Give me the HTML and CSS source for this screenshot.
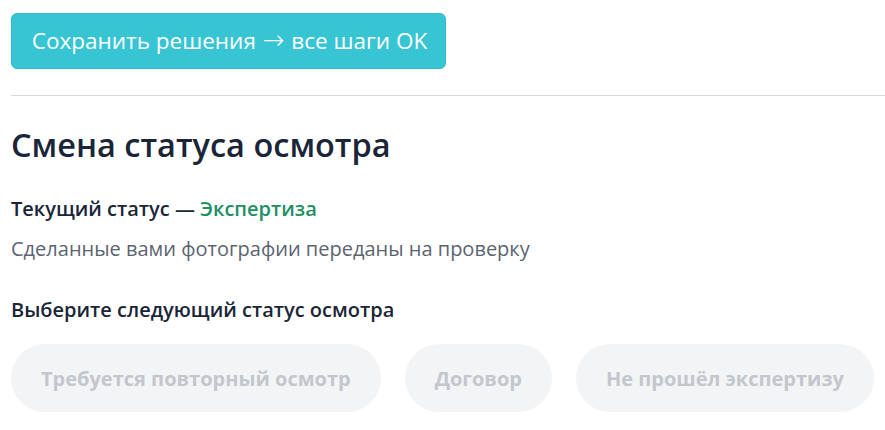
FILE: index.html
```html
<!DOCTYPE html>
<html lang="ru">
<head>
<meta charset="utf-8">
<link rel="stylesheet" href="styles.css">
</head>
<body>
<div class="page">
  <button class="save-btn">Сохранить решения <span class="arrow">→</span> все шаги OK</button>
  <hr class="divider">
  <h2 class="title">Смена статуса осмотра</h2>
  <p class="current">Текущий статус — <span class="status">Экспертиза</span></p>
  <p class="desc">Сделанные вами фотографии переданы на проверку</p>
  <p class="choose">Выберите следующий статус осмотра</p>
  <div class="options">
    <button class="pill" disabled>Требуется повторный осмотр</button>
    <button class="pill" disabled>Договор</button>
    <button class="pill" disabled>Не прошёл экспертизу</button>
  </div>
</div>
</body>
</html>
```

FILE: styles.css
```css
* { box-sizing: border-box; }
html, body { margin: 0; padding: 0; background: #fff; }
body { font-family: "Open Sans", "Noto Sans", sans-serif; color: #1a2638; }
.page { padding: 13px 0 0 11px; }
.save-btn {
  display: block;
  width: 435px;
  height: 56px;
  background: #37c5d3;
  border: 1px solid #33bccb;
  border-radius: 6px;
  color: #fff;
  font-family: inherit;
  font-size: 22.5px;
  line-height: 30px;
  padding: 0 0 0 2px;
}
.arrow {
  font-family: "DejaVu Sans", sans-serif;
  font-weight: 200;
  font-size: 26px;
  line-height: 0;
  margin: 0 1px;
}
.divider {
  margin: 26px 0 0 0;
  border: 0;
  border-top: 1px solid #d9d9d9;
  height: 0;
}
.title {
  margin: 27px 0 0;
  font-size: 32.5px;
  font-weight: 600;
  line-height: 44px;
  color: #1a2638;
}
.current {
  margin: 28px 0 0;
  font-size: 20px;
  font-weight: 600;
  line-height: 28px;
}
.status { color: #218f63; }
.desc {
  margin: 12px 0 0;
  font-size: 20px;
  line-height: 28px;
  color: #5c6470;
}
.choose {
  margin: 33px 0 0;
  font-size: 20px;
  font-weight: 600;
  line-height: 28px;
}
.options {
  display: flex;
  gap: 24px;
  margin-top: 20px;
}
.pill {
  height: 68px;
  border: 0;
  border-radius: 34px;
  background: #f3f4f6;
  color: #c3c7cd;
  font-family: inherit;
  font-size: 20px;
  font-weight: 700;
  padding: 0 30px;
}
```
